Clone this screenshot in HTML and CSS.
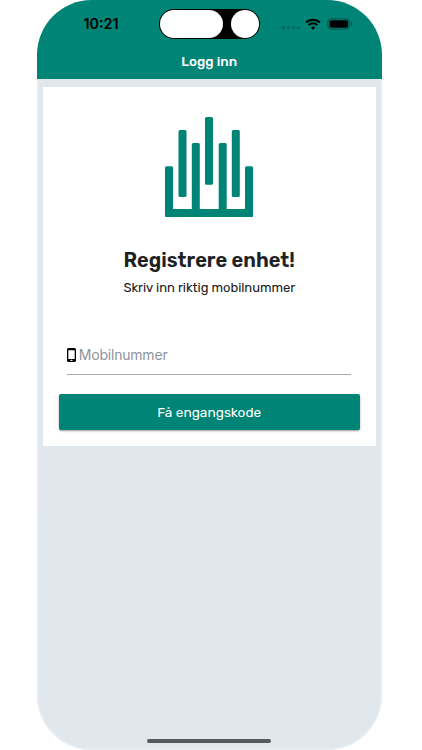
FILE: index.html
```html
<!DOCTYPE html>
<html lang="no">
<head>
    <meta charset="UTF-8">
    <meta name="viewport" content="width=device-width, initial-scale=1.0">
    <title>Logg inn</title>
    <link rel="stylesheet" href="styles.css">
</head>
<body>
    <div class="phone">
        <header class="header">
            <div class="status-bar">
                <span class="time">10:21</span>
                <div class="island">
                    <span class="island-pill"></span>
                    <span class="island-dot"></span>
                </div>
                <div class="status-icons">
                    <svg class="signal" width="18" height="4" viewBox="0 0 18 4">
                        <rect x="0" y="0.5" width="3" height="2.5" rx="1"/>
                        <rect x="5" y="0.5" width="3" height="2.5" rx="1"/>
                        <rect x="10" y="0.5" width="3" height="2.5" rx="1"/>
                        <rect x="15" y="0.5" width="3" height="2.5" rx="1"/>
                    </svg>
                    <svg class="wifi" width="16" height="12" viewBox="0 0 16 12">
                        <path d="M1.1 4.5a9.8 9.8 0 0 1 13.8 0M3.6 7.1a6.2 6.2 0 0 1 8.8 0" fill="none" stroke="#000" stroke-width="2"/>
                        <path d="M5.8 9.4a3.4 3.4 0 0 1 4.4 0L8 11.8z"/>
                    </svg>
                    <svg class="battery" width="26" height="12" viewBox="0 0 26 12">
                        <rect x="0.8" y="0.8" width="22" height="10.4" rx="3.5" fill="none" stroke="#000" stroke-opacity="0.4"/>
                        <rect x="2.5" y="2.3" width="18.6" height="7.4" rx="2"/>
                        <path d="M24 4v4q1.5-.7 1.5-2T24 4z" fill-opacity="0.4"/>
                    </svg>
                </div>
            </div>
            <div class="title">Logg inn</div>
        </header>

        <main class="card">
            <svg class="logo" width="88" height="100" viewBox="0 0 88 100" fill="#008476">
                <rect x="0" y="49.3" width="8" height="50.7" rx="1.5"/>
                <rect x="13.5" y="13" width="8" height="67" rx="1.5"/>
                <rect x="26.8" y="26" width="8" height="72" rx="1.5"/>
                <rect x="40" y="0" width="8" height="67.7" rx="1.5"/>
                <rect x="53.7" y="26" width="8" height="72" rx="1.5"/>
                <rect x="66.8" y="13" width="8" height="67" rx="1.5"/>
                <rect x="80" y="49.3" width="8" height="50.7" rx="1.5"/>
                <rect x="0" y="92" width="88" height="8" rx="1.5"/>
            </svg>
            <h1>Registrere enhet!</h1>
            <p class="subtitle">Skriv inn riktig mobilnummer</p>
            <label class="field">
                <svg width="9" height="14" viewBox="0 0 9 14">
                    <path fill-rule="evenodd" d="M1.6 0h5.8Q9 0 9 1.6v10.8Q9 14 7.4 14H1.6Q0 14 0 12.4V1.6Q0 0 1.6 0zM1.3 2.3v8.6h6.4V2.3z"/>
                    <rect x="3.5" y="11.8" width="2" height="1.1" rx=".5" fill="#fff"/>
                </svg>
                <input type="tel" placeholder="Mobilnummer">
            </label>
            <button class="submit">Få engangskode</button>
        </main>

        <div class="home-bar"></div>
    </div>
</body>
</html>
```
FILE: styles.css
```css
body {
    margin: 0;
    background-color: #fff;
    font-family: Rubik, Roboto, sans-serif;
}

.phone {
    box-sizing: border-box;
    display: flex;
    flex-direction: column;
    width: 345.5px;
    height: 750px;
    margin-left: 36.5px;
    background-color: #e0e7ed;
    border-radius: 55px;
    overflow: hidden;
    box-shadow: inset 0 0 0 1.5px #e7edf2;
}

.header {
    height: 79px;
    background-color: #008476;
}

.status-bar {
    display: flex;
    height: 39px;
    padding-top: 9px;
    box-sizing: border-box;
}

.time {
    width: 75.5px;
    padding-left: 47px;
    font-family: Inter, sans-serif;
    font-size: 14.3px;
    font-weight: 600;
    line-height: 30px;
}

.island {
    display: flex;
    justify-content: space-between;
    box-sizing: border-box;
    width: 100.5px;
    height: 30px;
    padding: 1px;
    border-radius: 15px;
    background-color: #000;
}

.island-pill,
.island-dot {
    width: 62.5px;
    height: 28px;
    border-radius: 14px;
    background-color: #fff;
}

.island-dot {
    width: 28px;
}

.status-icons {
    display: flex;
    align-items: center;
    height: 29px;
    margin-left: 22px;
}

.signal {
    margin: 8px 5px 0 0;
    opacity: 0.25;
}

.wifi {
    margin-right: 6px;
}

.title {
    color: #fff;
    font-size: 13.5px;
    font-weight: 500;
    line-height: 45px;
    text-align: center;
}

.card {
    display: flex;
    flex-direction: column;
    align-items: center;
    box-sizing: border-box;
    width: 332.5px;
    height: 359px;
    margin: 8px 0 0 6.5px;
    padding: 30px 16px 16px;
    background-color: #fff;
}

h1 {
    margin: 31px 0 0;
    color: #202123;
    font-size: 20px;
    font-weight: 600;
    line-height: 24px;
    white-space: nowrap;
}

.subtitle {
    margin: 7px 0 0;
    color: #202123;
    font-size: 13px;
    line-height: 17px;
    letter-spacing: -0.05px;
    white-space: nowrap;
}

.field {
    display: flex;
    align-items: center;
    box-sizing: border-box;
    width: 284px;
    height: 39px;
    margin-top: 40px;
    border-bottom: 1px solid #a5abb2;
}

.field input {
    width: 260px;
    margin: 0 0 2px 2.5px;
    padding: 0;
    border: none;
    outline: none;
    background: none;
    font-family: Inter, sans-serif;
    font-size: 14px;
    letter-spacing: -0.2px;
}

.field input::placeholder {
    color: #8d949e;
}

.submit {
    flex-shrink: 0;
    width: 301px;
    height: 36px;
    margin-top: 19px;
    border: none;
    border-radius: 2px;
    background-color: #008476;
    box-shadow: 0 1px 2px rgba(0, 0, 0, 0.4);
    color: #fff;
    font-family: inherit;
    font-size: 13.7px;
}

.home-bar {
    width: 124px;
    height: 4px;
    margin: auto auto 7px 110.5px;
    border-radius: 2px;
    background-color: #58595b;
}
```
